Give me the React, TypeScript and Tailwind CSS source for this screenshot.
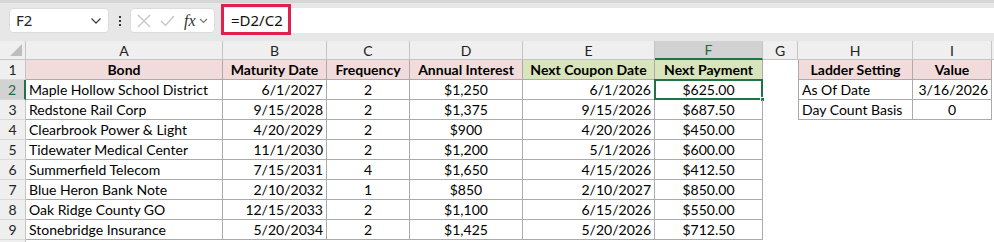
import React from 'react';

const FONT = { fontFamily: 'Lato, "Liberation Sans", sans-serif' };

const COLS = ['A', 'B', 'C', 'D', 'E', 'F', 'G', 'H', 'I', ''];

type Row = [string, string, string, string, string, string];

const ROWS: Row[] = [
  ['Maple Hollow School District', '6/1/2027', '2', '$1,250', '6/1/2026', '$625.00'],
  ['Redstone Rail Corp', '9/15/2028', '2', '$1,375', '9/15/2026', '$687.50'],
  ['Clearbrook Power & Light', '4/20/2029', '2', '$900', '4/20/2026', '$450.00'],
  ['Tidewater Medical Center', '11/1/2030', '2', '$1,200', '5/1/2026', '$600.00'],
  ['Summerfield Telecom', '7/15/2031', '4', '$1,650', '4/15/2026', '$412.50'],
  ['Blue Heron Bank Note', '2/10/2032', '1', '$850', '2/10/2027', '$850.00'],
  ['Oak Ridge County GO', '12/15/2033', '2', '$1,100', '6/15/2026', '$550.00'],
  ['Stonebridge Insurance', '5/20/2034', '2', '$1,425', '5/20/2026', '$712.50'],
];

const SETTINGS: [string, string, string][] = [
  ['Ladder Setting', 'Value', 'center'],
  ['As Of Date', '3/16/2026', 'right'],
  ['Day Count Basis', '0', 'center'],
];

const B = 'border-r border-b border-[#ababab]';

function RowHead({ n, active }: { n?: number; active?: boolean }) {
  return (
    <div
      className={
        'flex items-center justify-center text-[14px] border-b border-[#d9d9d9] ' +
        (active
          ? 'bg-[#d2d2d2] text-[#1e6b3f] border-r-2 border-r-[#217346]'
          : 'bg-[#efefef] text-[#222] border-r border-r-[#c4c4c4]')
      }
    >
      {n}
    </div>
  );
}

function Cell({ children, className = '' }: { children?: React.ReactNode; className?: string }) {
  return (
    <div className={'flex items-center px-[3px] text-[14px] text-black whitespace-nowrap overflow-hidden ' + className}>
      {children}
    </div>
  );
}

export default function App() {
  return (
    <div className="w-[994px] h-[242px] overflow-hidden bg-white" style={FONT}>
      {/* formula bar */}
      <div className="h-[41px] bg-[#e7e7e7] border-t-[3px] border-[#d6d6d6] flex items-start pt-[5px] pl-[9px]">
        <div className="w-[100px] h-[25px] bg-white rounded-[4px] border border-[#dcdcdc] flex items-center justify-between px-[6px]">
          <span className="text-[15px] text-[#222]" style={{ fontFamily: '"Noto Sans", sans-serif' }}>F2</span>
          <svg width="12" height="8" viewBox="0 0 12 8" fill="none" stroke="#444" strokeWidth="1.3">
            <path d="M1.5 1.5 L6 6 L10.5 1.5" />
          </svg>
        </div>
        <div className="w-[21px] h-[25px] flex flex-col items-center justify-center gap-[2px]">
          <span className="w-[2px] h-[2px] bg-[#333]" />
          <span className="w-[2px] h-[2px] bg-[#333]" />
          <span className="w-[2px] h-[2px] bg-[#333]" />
        </div>
        <div className="w-[85px] h-[25px] bg-white rounded-[4px] border border-[#dcdcdc] flex items-center pl-[6px] gap-[9px]">
          <svg width="14" height="14" viewBox="0 0 14 14" stroke="#c3c3c3" strokeWidth="1.2">
            <path d="M1 1 L13 13 M13 1 L1 13" />
          </svg>
          <svg width="15" height="12" viewBox="0 0 15 12" fill="none" stroke="#c3c3c3" strokeWidth="1.2">
            <path d="M1 6 L5.5 10.5 L14 1" />
          </svg>
          <span className="flex items-center gap-[3px]">
            <span className="text-[16px] italic text-[#333] leading-none" style={{ fontFamily: '"Liberation Serif", serif' }}>
              fx
            </span>
            <svg width="9" height="6" viewBox="0 0 9 6" fill="none" stroke="#777" strokeWidth="1.1">
              <path d="M1 1 L4.5 4.5 L8 1" />
            </svg>
          </span>
        </div>
        <div className="relative flex-1 ml-[6px] h-[25px] bg-white flex items-center pl-[10px]">
          <span className="text-[15px] text-[#111]" style={{ fontFamily: '"Noto Sans", sans-serif' }}>=D2/C2</span>
          <div className="absolute left-0 top-[-4px] w-[70px] h-[31px] border-[3px] border-[#e0204f]" />
        </div>
      </div>

      {/* sheet */}
      <div className="grid grid-cols-[26px_197px_104px_83px_113px_132px_108px_35px_115px_79px_1fr] grid-rows-[19px_repeat(10,20px)]">
        {/* column headers */}
        <div className="relative bg-[#efefef] border-r border-b border-[#c4c4c4]">
          <div className="absolute right-[3px] bottom-[3px] w-0 h-0 border-l-[12px] border-l-transparent border-b-[12px] border-b-[#bdbdbd]" />
        </div>
        {COLS.map((c, i) =>
          c === 'F' ? (
            <div key={i} className="flex items-center justify-center text-[14px] bg-[#d2d2d2] text-[#1e6b3f] border-r border-r-[#c4c4c4] border-b-2 border-b-[#217346]">
              {c}
            </div>
          ) : (
            <div key={i} className="flex items-center justify-center text-[14px] bg-[#efefef] text-[#222] border-r border-b border-[#c4c4c4]">
              {c}
            </div>
          )
        )}

        {/* row 1 */}
        <RowHead n={1} />
        <Cell className={B + ' justify-center font-bold bg-[#f2dcdb]'}>Bond</Cell>
        <Cell className={B + ' justify-center font-bold bg-[#f2dcdb]'}>Maturity Date</Cell>
        <Cell className={B + ' justify-center font-bold bg-[#f2dcdb]'}>Frequency</Cell>
        <Cell className={B + ' justify-center font-bold bg-[#f2dcdb]'}>Annual Interest</Cell>
        <Cell className={B + ' justify-center font-bold bg-[#d8e4bc]'}>Next Coupon Date</Cell>
        <Cell className={B + ' justify-center font-bold bg-[#d8e4bc]'}>Next Payment</Cell>
        <Cell />
        <Cell className={B + ' border-l justify-center font-bold bg-[#f2dcdb]'}>{SETTINGS[0][0]}</Cell>
        <Cell className={B + ' justify-center font-bold bg-[#f2dcdb]'}>{SETTINGS[0][1]}</Cell>
        <Cell />

        {ROWS.map((r, i) => {
          const n = i + 2;
          const s = SETTINGS[i + 1];
          return (
            <React.Fragment key={n}>
              <RowHead n={n} active={n === 2} />
              <Cell className={B}>{r[0]}</Cell>
              <Cell className={B + ' justify-end'}>{r[1]}</Cell>
              <Cell className={B + ' justify-center'}>{r[2]}</Cell>
              <Cell className={B + ' justify-center'}>{r[3]}</Cell>
              <Cell className={B + ' justify-end'}>{r[4]}</Cell>
              <Cell className={B + ' justify-center relative overflow-visible'}>
                {r[5]}
                {n === 2 && (
                  <>
                    <div className="absolute left-[-1px] top-[-1px] right-[-1px] bottom-[-1px] border-2 border-[#217346]" />
                    <div className="absolute right-[-3px] bottom-[-3px] w-[5px] h-[5px] bg-[#217346] border border-white" />
                  </>
                )}
              </Cell>
              <Cell />
              {s ? (
                <>
                  <Cell className={B + ' border-l'}>{s[0]}</Cell>
                  <Cell className={B + (s[2] === 'right' ? ' justify-end' : ' justify-center')}>{s[1]}</Cell>
                </>
              ) : (
                <>
                  <Cell />
                  <Cell />
                </>
              )}
              <Cell />
            </React.Fragment>
          );
        })}

        {/* row 10 peek */}
        <RowHead />
      </div>
    </div>
  );
}
